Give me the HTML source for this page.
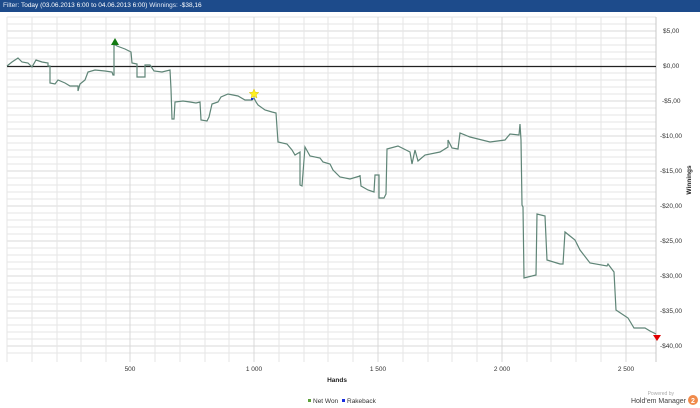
<!DOCTYPE html>
<html><head><style>
html,body{margin:0;padding:0;width:700px;height:408px;background:#fff;overflow:hidden;font-family:"Liberation Sans",sans-serif}
.hdr{position:absolute;left:0;top:0;width:700px;height:12px;background:#1d4b8b;color:#e8eef8;font-size:6.5px;line-height:12px;padding-left:3px;box-sizing:border-box;white-space:nowrap}
</style></head><body>
<div class="hdr">Filter: <b style="font-weight:normal;color:#fff">Today (03.06.2013 6:00 to 04.06.2013 6:00)</b> Winnings: <span style="color:#fff">-$38,16</span></div>
<svg width="700" height="408" style="position:absolute;left:0;top:0" xmlns="http://www.w3.org/2000/svg">
<g id="grid" stroke="#ececec" stroke-width="1">
<script></script>
</g>
<g stroke="#e6e6e6" stroke-width="1" shape-rendering="crispEdges">
<line x1="7" y1="24" x2="656" y2="24"/><line x1="7" y1="31" x2="656" y2="31" stroke="#d8d8d8"/><line x1="7" y1="38" x2="656" y2="38"/><line x1="7" y1="45" x2="656" y2="45"/><line x1="7" y1="52" x2="656" y2="52"/><line x1="7" y1="59" x2="656" y2="59"/>
<line x1="7" y1="73" x2="656" y2="73"/><line x1="7" y1="80" x2="656" y2="80"/><line x1="7" y1="87" x2="656" y2="87"/><line x1="7" y1="94" x2="656" y2="94"/><line x1="7" y1="101" x2="656" y2="101" stroke="#d8d8d8"/>
<line x1="7" y1="108" x2="656" y2="108"/><line x1="7" y1="115" x2="656" y2="115"/><line x1="7" y1="122" x2="656" y2="122"/><line x1="7" y1="129" x2="656" y2="129"/><line x1="7" y1="136" x2="656" y2="136" stroke="#d8d8d8"/>
<line x1="7" y1="143" x2="656" y2="143"/><line x1="7" y1="150" x2="656" y2="150"/><line x1="7" y1="157" x2="656" y2="157"/><line x1="7" y1="164" x2="656" y2="164"/><line x1="7" y1="171" x2="656" y2="171" stroke="#d8d8d8"/>
<line x1="7" y1="178" x2="656" y2="178"/><line x1="7" y1="185" x2="656" y2="185"/><line x1="7" y1="192" x2="656" y2="192"/><line x1="7" y1="199" x2="656" y2="199"/><line x1="7" y1="206" x2="656" y2="206" stroke="#d8d8d8"/>
<line x1="7" y1="213" x2="656" y2="213"/><line x1="7" y1="220" x2="656" y2="220"/><line x1="7" y1="227" x2="656" y2="227"/><line x1="7" y1="234" x2="656" y2="234"/><line x1="7" y1="241" x2="656" y2="241" stroke="#d8d8d8"/>
<line x1="7" y1="248" x2="656" y2="248"/><line x1="7" y1="255" x2="656" y2="255"/><line x1="7" y1="262" x2="656" y2="262"/><line x1="7" y1="269" x2="656" y2="269"/><line x1="7" y1="276" x2="656" y2="276" stroke="#d8d8d8"/>
<line x1="7" y1="283" x2="656" y2="283"/><line x1="7" y1="290" x2="656" y2="290"/><line x1="7" y1="297" x2="656" y2="297"/><line x1="7" y1="304" x2="656" y2="304"/><line x1="7" y1="311" x2="656" y2="311" stroke="#d8d8d8"/>
<line x1="7" y1="318" x2="656" y2="318"/><line x1="7" y1="325" x2="656" y2="325"/><line x1="7" y1="332" x2="656" y2="332"/><line x1="7" y1="339" x2="656" y2="339"/><line x1="7" y1="346" x2="656" y2="346" stroke="#d8d8d8"/>
<line x1="7" y1="353" x2="656" y2="353"/><line x1="7" y1="17" x2="656" y2="17"/>
<line x1="32" y1="17" x2="32" y2="362"/><line x1="57" y1="17" x2="57" y2="362"/><line x1="81" y1="17" x2="81" y2="362"/><line x1="106" y1="17" x2="106" y2="362"/><line x1="130" y1="17" x2="130" y2="362" stroke="#d8d8d8"/>
<line x1="155" y1="17" x2="155" y2="362"/><line x1="180" y1="17" x2="180" y2="362"/><line x1="205" y1="17" x2="205" y2="362"/><line x1="229" y1="17" x2="229" y2="362"/><line x1="254" y1="17" x2="254" y2="362" stroke="#d8d8d8"/>
<line x1="279" y1="17" x2="279" y2="362"/><line x1="304" y1="17" x2="304" y2="362"/><line x1="328" y1="17" x2="328" y2="362"/><line x1="353" y1="17" x2="353" y2="362"/><line x1="378" y1="17" x2="378" y2="362" stroke="#d8d8d8"/>
<line x1="403" y1="17" x2="403" y2="362"/><line x1="428" y1="17" x2="428" y2="362"/><line x1="452" y1="17" x2="452" y2="362"/><line x1="477" y1="17" x2="477" y2="362"/><line x1="502" y1="17" x2="502" y2="362" stroke="#d8d8d8"/>
<line x1="527" y1="17" x2="527" y2="362"/><line x1="551" y1="17" x2="551" y2="362"/><line x1="576" y1="17" x2="576" y2="362"/><line x1="601" y1="17" x2="601" y2="362"/><line x1="626" y1="17" x2="626" y2="362" stroke="#d8d8d8"/>
<line x1="7" y1="17" x2="7" y2="362"/><line x1="656" y1="17" x2="656" y2="362" stroke="#c8c8c8"/>
</g>
<line x1="7" y1="66.5" x2="656" y2="66.5" stroke="#222" stroke-width="1.3"/>
<polyline fill="none" stroke="#5f8577" stroke-width="1.2" points="7,66 12,62 18,58 22,62 28,63 32,67 36,60 42,62 48,63 48,66 50,66 50,83 55,84 58,80 65,83 70,86 78,86 78,91 80,84 85,80 88,72 95,70 105,71 112,72 113,75 114,75 114,44 117,46 125,49 131,52 132,63 137,64 137,77 145,77 145,65 150,65 154,71 162,72 170,70 171,89 172,119 174,119 175,102 183,101 190,102 196,103 200,102 201,120 207,121 209,117 212,104 218,102 221,97 228,94 238,96 245,100 252,100 254,98 256,102 258,105 265,110 272,112 276,113 278,142 287,144 292,150 295,155 300,152 300,185 302,186 305,147 310,156 320,158 323,162 330,164 333,170 340,177 350,179 360,176 360,175 361,186 368,190 374,192 375,175 379,175 379,198 384,198 386,194 387,149 398,146 410,152 412,164 415,150 418,161 425,155 440,152 448,147 448,140 452,148 458,149 460,133 470,137 490,142 505,140 510,134 519,135 520,124 521,140 522,205 523,207 524,278 536,275 537,214 545,216 547,260 560,264 563,264 565,232 575,240 580,250 590,263 607,266 608,264 614,272 616,310 628,318 634,328 645,328 650,331 656,334"/>
<polygon points="115,38 111,45 119,45" fill="#127a12"/>
<polygon points="653,335 661,335 657,341" fill="#e00000"/>
<polygon points="254,89 255.4,92.2 258.8,92.5 256.2,94.7 257,98 254,96.3 251,98 251.8,94.7 249.2,92.5 252.6,92.2" fill="#ffef20" stroke="#c8b400" stroke-width="0.4"/>
<rect x="251" y="98" width="2" height="2" fill="#1a2ee0"/>
<g font-size="6.5" fill="#333" font-family="Liberation Sans,sans-serif">
<text x="663" y="33">$5,00</text><text x="663" y="68">$0,00</text><text x="662" y="103">-$5,00</text>
<text x="660" y="138">-$10,00</text><text x="660" y="173">-$15,00</text><text x="660" y="208">-$20,00</text>
<text x="660" y="243">-$25,00</text><text x="660" y="278">-$30,00</text><text x="660" y="313">-$35,00</text><text x="660" y="348">-$40,00</text>
<text x="130" y="371" text-anchor="middle">500</text><text x="254" y="371" text-anchor="middle">1 000</text>
<text x="378" y="371" text-anchor="middle">1 500</text><text x="502" y="371" text-anchor="middle">2 000</text><text x="626" y="371" text-anchor="middle">2 500</text>
<text x="337" y="382" text-anchor="middle" font-weight="bold" fill="#222">Hands</text>
<text transform="translate(691,180) rotate(-90)" text-anchor="middle" font-weight="bold" fill="#222">Winnings</text>
<rect x="308" y="399" width="3" height="3" fill="#5fa23c"/><text x="313" y="403">Net Won</text>
<rect x="342" y="399" width="3" height="3" fill="#1a2ee0"/><text x="347" y="403">Rakeback</text>
<text x="674" y="395" font-size="5" fill="#aaa" text-anchor="end">Powered by</text>
<text x="686" y="403" font-size="7" fill="#444" text-anchor="end">Hold'em Manager</text>
</g>
<circle cx="693" cy="400" r="5" fill="#f08a4b"/>
<text x="693" y="403" font-size="7" font-weight="bold" fill="#fff" text-anchor="middle" font-family="Liberation Sans,sans-serif">2</text>
</svg>
</body></html>
